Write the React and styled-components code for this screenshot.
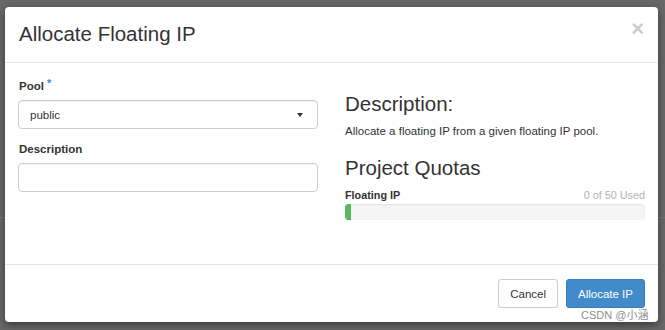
import React from 'react';
import styled, { createGlobalStyle } from 'styled-components';

const GlobalStyle = createGlobalStyle`
  html, body {
    margin: 0;
    padding: 0;
    height: 330px;
    overflow: hidden;
  }
  body {
    background-color: #686868;
    background-image: linear-gradient(
      to bottom,
      transparent 217px,
      #777 217px,
      #777 218px,
      transparent 218px
    );
    font-family: "Liberation Sans", Arial, Helvetica, sans-serif;
    color: #333;
  }
`;

const Dialog = styled.div`
  position: relative;
  margin: 7px 0 0 5px;
  width: 653px;
  height: 315px;
  background: #fff;
  border-radius: 4px;
  box-shadow: 0 3px 9px rgba(0, 0, 0, 0.45);
  display: flex;
  flex-direction: column;
`;

const Header = styled.div`
  height: 56px;
  border-bottom: 1px solid #e5e5e5;
  padding: 15px 14px 0 14px;
  box-sizing: border-box;
  display: flex;
  justify-content: space-between;
  align-items: flex-start;
`;

const Title = styled.h4`
  margin: 0;
  font-size: 20.5px;
  line-height: 24px;
  font-weight: normal;
  color: #333;
`;

const Close = styled.button`
  border: 0;
  background: none;
  padding: 0;
  margin-top: -5px;
  font-family: "Liberation Sans", Arial, sans-serif;
  font-size: 22px;
  font-weight: bold;
  line-height: 24px;
  color: #000;
  opacity: 0.2;
  cursor: pointer;
`;

const Body = styled.div`
  flex: 1;
  padding: 15px 13px 0 13px;
  display: grid;
  grid-template-columns: 300px 300px;
  column-gap: 27px;
  align-content: start;
`;

const Column = styled.div`
  display: flex;
  flex-direction: column;
`;

const Label = styled.label`
  display: block;
  font-size: 11.5px;
  line-height: 16px;
  font-weight: bold;
  color: #333;
  margin: ${(p) => (p.$first ? '0' : '12px')} 0 6px 1px;
`;

const Required = styled.span`
  color: #428bca;
  font-size: 11px;
  position: relative;
  top: -3px;
  margin-left: 3px;
`;

const SelectBox = styled.div`
  position: relative;
  height: 29px;
  box-sizing: border-box;
  border: 1px solid #ccc;
  border-radius: 4px;
  display: flex;
  align-items: center;
  padding: 0 11px;
  font-size: 11.5px;
  color: #333;
  box-shadow: inset 0 1px 1px rgba(0, 0, 0, 0.05);
`;

const Caret = styled.span`
  margin-left: auto;
  margin-right: 3px;
  width: 0;
  height: 0;
  border-left: 3.5px solid transparent;
  border-right: 3.5px solid transparent;
  border-top: 4px solid #333;
`;

const TextInput = styled.input`
  height: 29px;
  box-sizing: border-box;
  border: 1px solid #ccc;
  border-radius: 4px;
  padding: 0 11px;
  font-family: inherit;
  font-size: 11.5px;
  box-shadow: inset 0 1px 1px rgba(0, 0, 0, 0.05);
  outline: none;
`;

const Heading = styled.h3`
  margin: ${(p) => p.$top}px 0 0 0;
  font-size: 20.5px;
  line-height: 24px;
  font-weight: normal;
  color: #333;
`;

const Text = styled.p`
  margin: 7px 0 0 0;
  font-size: 11.5px;
  line-height: 16px;
  color: #333;
`;

const QuotaRow = styled.div`
  margin-top: 8px;
  display: flex;
  justify-content: space-between;
  font-size: 10.8px;
  line-height: 15px;
`;

const QuotaName = styled.strong`
  color: #333;
`;

const QuotaUsed = styled.span`
  color: #b3b3b3;
`;

const Progress = styled.div`
  margin-top: 1.5px;
  height: 16px;
  background: #f5f5f5;
  border-radius: 4px;
  overflow: hidden;
  box-shadow: inset 0 1px 2px rgba(0, 0, 0, 0.08);
`;

const ProgressFill = styled.div`
  height: 100%;
  background: #5cb85c;
  box-shadow: inset 0 -1px 0 rgba(0, 0, 0, 0.15);
`;

const Footer = styled.div`
  border-top: 1px solid #e5e5e5;
  padding: 14px 13px;
  display: flex;
  justify-content: flex-end;
  gap: 8px;
`;

const Button = styled.button`
  height: 29px;
  padding: 0 11px;
  box-sizing: border-box;
  border-radius: 3px;
  font-family: inherit;
  font-size: 11.5px;
  cursor: pointer;
  border: 1px solid ${(p) => (p.$primary ? '#357ebd' : '#ccc')};
  background: ${(p) => (p.$primary ? '#428bca' : '#fff')};
  color: ${(p) => (p.$primary ? '#fff' : '#333')};
`;

const Watermark = styled.div`
  position: absolute;
  left: 576px;
  top: 301px;
  font-family: "Liberation Sans", "Noto Sans CJK SC", sans-serif;
  font-size: 11px;
  line-height: 14px;
  color: #8f8f8f;
  text-shadow: 0 0 1px #fff;
  white-space: nowrap;
`;

const quota = { name: 'Floating IP', used: 0, total: 50 };

export default function App() {
  const pct = Math.max(2, (quota.used / quota.total) * 100);
  return (
    <>
      <GlobalStyle />
      <Dialog>
        <Header>
          <Title>Allocate Floating IP</Title>
          <Close aria-label="Close">×</Close>
        </Header>
        <Body>
          <Column>
            <Label $first>
              Pool<Required>*</Required>
            </Label>
            <SelectBox>
              public
              <Caret />
            </SelectBox>
            <Label>Description</Label>
            <TextInput type="text" />
          </Column>
          <Column>
            <Heading $top={14}>Description:</Heading>
            <Text>Allocate a floating IP from a given floating IP pool.</Text>
            <Heading $top={16.5}>Project Quotas</Heading>
            <QuotaRow>
              <QuotaName>{quota.name}</QuotaName>
              <QuotaUsed>
                {quota.used} of {quota.total} Used
              </QuotaUsed>
            </QuotaRow>
            <Progress>
              <ProgressFill style={{ width: `${pct}%` }} />
            </Progress>
          </Column>
        </Body>
        <Footer>
          <Button>Cancel</Button>
          <Button $primary>Allocate IP</Button>
        </Footer>
        <Watermark>CSDN @小涵</Watermark>
      </Dialog>
    </>
  );
}
